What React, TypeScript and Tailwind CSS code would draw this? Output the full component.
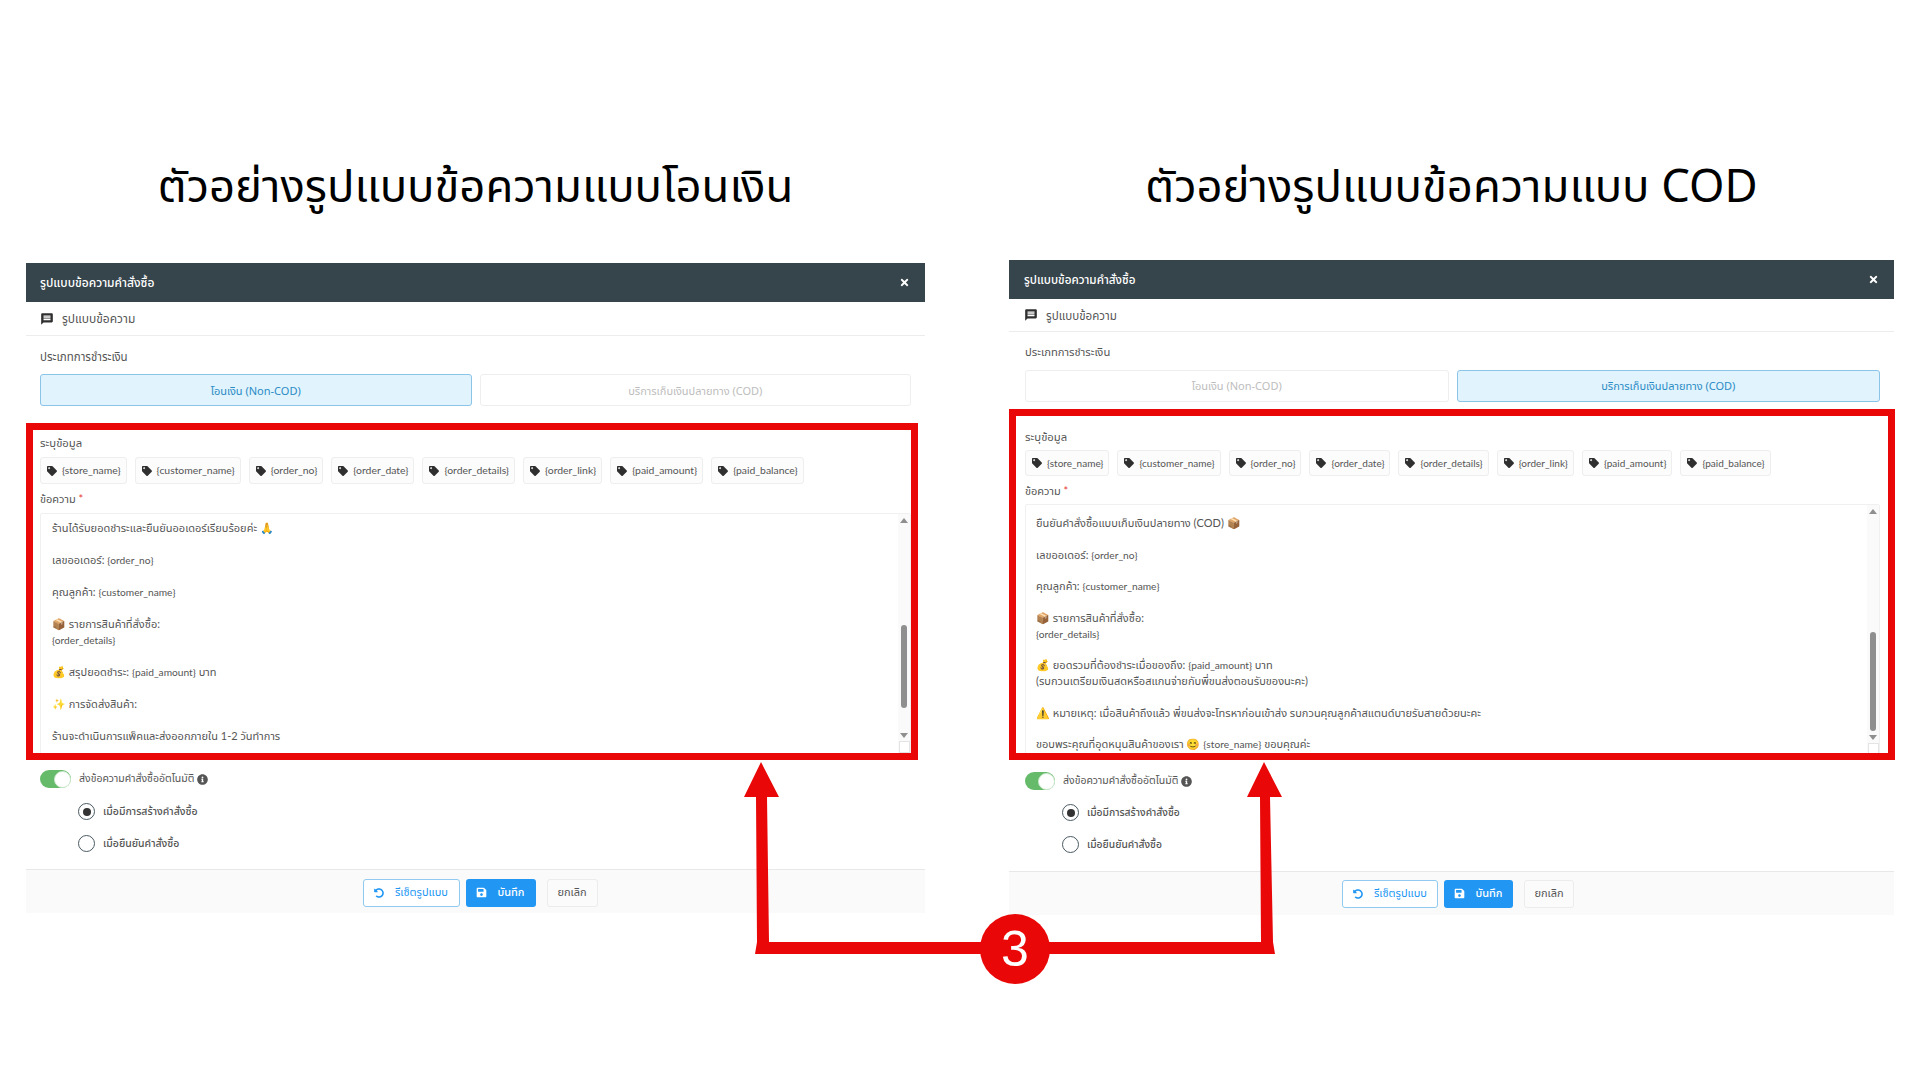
import React from 'react';
import { FaTag, FaSave, FaUndoAlt, FaInfoCircle, FaTimes } from 'react-icons/fa';
import { MdMessage } from 'react-icons/md';

const tags = ['{store_name}', '{customer_name}', '{order_no}', '{order_date}', '{order_details}', '{order_link}', '{paid_amount}', '{paid_balance}'];

const transferText = `ร้านได้รับยอดชำระและยืนยันออเดอร์เรียบร้อยค่ะ 🙏

เลขออเดอร์: {order_no}

คุณลูกค้า: {customer_name}

📦 รายการสินค้าที่สั่งซื้อ:
{order_details}

💰 สรุปยอดชำระ: {paid_amount} บาท

✨ การจัดส่งสินค้า:

ร้านจะดำเนินการแพ็คและส่งออกภายใน 1-2 วันทำการ`;

const codText = `ยืนยันคำสั่งซื้อแบบเก็บเงินปลายทาง (COD) 📦

เลขออเดอร์: {order_no}

คุณลูกค้า: {customer_name}

📦 รายการสินค้าที่สั่งซื้อ:
{order_details}

💰 ยอดรวมที่ต้องชำระเมื่อของถึง: {paid_amount} บาท
(รบกวนเตรียมเงินสดหรือสแกนจ่ายกับพี่ขนส่งตอนรับของนะคะ)

⚠️ หมายเหตุ: เมื่อสินค้าถึงแล้ว พี่ขนส่งจะโทรหาก่อนเข้าส่ง รบกวนคุณลูกค้าสแตนด์บายรับสายด้วยนะคะ

ขอบพระคุณที่อุดหนุนสินค้าของเรา 😊 {store_name} ขอบคุณค่ะ`;

const activeTab = "flex-1 h-full flex items-center justify-center rounded-[3px] border border-[#8cc4e8] bg-[#e1f3fd] text-[#2a8bc5] font-['Noto_Sans','Noto_Sans_Thai',sans-serif]";
const idleTab = "flex-1 h-full flex items-center justify-center rounded-[3px] border border-[#eeeeee] bg-white text-[#bdbdbd] font-['Noto_Sans','Noto_Sans_Thai',sans-serif]";

// fixed-height rows so the emoji lines don't push the text down
const MessageBody: React.FC<{ text: string; cod: boolean }> = ({ text, cod }) => (
  <>
    {text.split('\n').map((line, l) => (
      <div key={l} className={`whitespace-nowrap ${cod ? 'h-[15.8px] leading-[15.8px]' : 'h-[16px] leading-[16px]'}`}>
        {line.split(/(\{[a-z_]+\})/).map((part, i) =>
          part.startsWith('{') ? <span key={i} className="text-[10.2px]">{part}</span> : part
        )}
      </div>
    ))}
  </>
);

const Modal: React.FC<{ cod: boolean }> = ({ cod }) => {
  const tabPad = cod ? 'pt-px' : 'pt-[3px]';
  const radioText = cod ? 'text-[10.3px]' : 'text-[10.5px]';
  return (
    <div className={`text-[11px] text-[#555] ${cod ? 'w-[885px]' : 'w-[899px]'}`}>
      {/* header */}
      <div className={`flex items-center justify-between bg-[#36444b] text-white h-[39px] ${cod ? 'pl-[15px] pr-[15px]' : 'pl-[14px] pr-[15px]'}`}>
        <span className={`font-medium pt-px ${cod ? 'text-[11.7px]' : 'text-[12px]'}`}>รูปแบบข้อความคำสั่งซื้อ</span>
        <FaTimes size={11} />
      </div>
      <div className={`flex items-center border-b border-[#ececec] ${cod ? 'h-[33px] pl-[15px]' : 'h-[34px] pl-[14px]'}`}>
        <MdMessage size={14} className="text-[#2f2f2f] mr-[8px]" />
        <span className={`pt-px ${cod ? 'text-[11.6px]' : 'text-[12px]'}`}>รูปแบบข้อความ</span>
      </div>

      <div className={cod ? 'pl-[16px] pr-[14px]' : 'pl-[14px] pr-[14px]'}>
        <div className={`leading-[16px] ${cod ? 'mt-[12px] text-[11.2px]' : 'mt-[13px] text-[11.5px]'}`}>ประเภทการชำระเงิน</div>
        <div className={`flex gap-2 h-[32px] ${cod ? 'mt-[10px]' : 'mt-[9px]'}`}>
          <div className={`${cod ? idleTab : activeTab} ${tabPad}`}>โอนเงิน (Non-COD)</div>
          <div className={`${cod ? activeTab : idleTab} ${tabPad}`}>บริการเก็บเงินปลายทาง (COD)</div>
        </div>

        <div className={`leading-[16px] text-[11.3px] ${cod ? 'mt-[27px]' : 'mt-[29px]'}`}>ระบุข้อมูล</div>
        <div className={`flex gap-2 ${cod ? 'mt-[5px] h-[26px]' : 'mt-[6px] h-[27px]'}`}>
          {tags.map((t) => (
            <div key={t} className="flex items-center gap-[5px] pl-[6px] pr-[5px] rounded-[3px] border border-[#eeeeee] bg-[#fcfcfc]">
              <FaTag size={10} className="text-[#2f2f2f]" />
              <span className={cod ? 'text-[10px]' : 'text-[10.4px]'}>{t}</span>
            </div>
          ))}
        </div>

        <div className="leading-[16px] mt-[7px]">
          ข้อความ <span className="text-[#e53935]">*</span>
        </div>
        <div className={`flex border border-[#f0f0f0] rounded-[2px] overflow-hidden ${cod ? 'h-[252px] mt-[5px]' : 'h-[244px] mt-[6px]'}`}>
          <div className={`flex-1 overflow-hidden ${cod ? 'pl-[10px] pt-[10px]' : 'pl-[11px] pt-[6px]'}`}>
            <MessageBody text={cod ? codText : transferText} cod={cod} />
          </div>
          <div className="w-[12px] bg-[#fafafa] flex flex-col items-center">
            <div className="w-0 h-0 mt-[4px] border-x-[4px] border-x-transparent border-b-[5px] border-b-[#8f8f8f]" />
            <div className={`w-[6px] rounded-full bg-[#8f8f8f] ${cod ? 'h-[101px] mt-[118px]' : 'h-[83px] mt-[102px]'}`} />
            <div className={`w-0 h-0 border-x-[4px] border-x-transparent border-t-[5px] border-t-[#8f8f8f] ${cod ? 'mt-[4px]' : 'mt-[25px]'}`} />
            <div className="w-[11px] h-[12px] mt-[3px] border border-[#e4e4e4] bg-white" />
          </div>
        </div>

        {/* auto send */}
        <div className={`flex items-center ${cod ? 'mt-[16px]' : 'mt-[13px]'}`}>
          <div className={`h-[18px] rounded-full bg-[#66bb6a] flex items-center justify-end ${cod ? 'w-[30px]' : 'w-[31px]'}`}>
            <div className="w-[17px] h-[17px] rounded-full bg-white border border-[#cfe9d0]" />
          </div>
          <span className="ml-[8px] text-[10.5px]">ส่งข้อความคำสั่งซื้ออัตโนมัติ</span>
          <FaInfoCircle size={11} className="ml-[3px] text-[#555]" />
        </div>
        <div className={`flex items-center ${cod ? 'ml-[37px] mt-[14px]' : 'ml-[38px] mt-[15px]'}`}>
          <div className="w-[17px] h-[17px] rounded-full border border-[#4a5a63] flex items-center justify-center">
            <div className="w-[8px] h-[8px] rounded-full bg-[#333]" />
          </div>
          <span className={`ml-[8px] font-medium ${radioText}`}>เมื่อมีการสร้างคำสั่งซื้อ</span>
        </div>
        <div className={`flex items-center mt-[15px] ${cod ? 'ml-[37px]' : 'ml-[38px]'}`}>
          <div className="w-[17px] h-[17px] rounded-full border border-[#4a5a63]" />
          <span className={`ml-[8px] font-medium ${radioText}`}>เมื่อยืนยันคำสั่งซื้อ</span>
        </div>
      </div>

      {/* footer */}
      <div className={`flex justify-center items-center gap-[6px] bg-[#fafafa] border-t border-[#e8e8e8] h-[44px] ${cod ? 'mt-[18px] pl-[13px]' : 'mt-[17px] pl-[9px] pt-[2px]'}`}>
        <button className={`h-[28px] flex items-center justify-center gap-[11px] rounded-[3px] border border-[#90caf0] bg-white text-[#2196f3] ${cod ? 'w-[96px]' : 'w-[97px]'}`}>
          <FaUndoAlt size={10} />
          รีเซ็ตรูปแบบ
        </button>
        <button className={`h-[28px] flex items-center justify-center gap-[10px] rounded-[3px] bg-[#2196f3] text-white font-medium ${cod ? 'w-[69px]' : 'w-[70px]'}`}>
          <FaSave size={11} />
          บันทึก
        </button>
        <button className={`h-[28px] ml-[5px] rounded-[3px] border border-[#ececec] bg-[#fbfbfb] text-[#555] ${cod ? 'w-[50px]' : 'w-[51px]'}`}>
          ยกเลิก
        </button>
      </div>
    </div>
  );
};

const App: React.FC = () => (
  <div className="relative w-[1920px] h-[1080px] bg-white overflow-hidden flex font-['Lato','Noto_Sans_Thai','Noto_Sans',sans-serif]">
    <div className="ml-[26px] w-[899px]">
      <h1 className="h-[263px] pt-[152px] text-center text-[45.4px] leading-[64px] font-normal text-black font-['Noto_Sans','Noto_Sans_Thai',sans-serif]">ตัวอย่างรูปแบบข้อความแบบโอนเงิน</h1>
      <Modal cod={false} />
    </div>
    <div className="ml-[84px] w-[885px]">
      <h1 className="h-[260px] pt-[152px] text-center text-[45.4px] leading-[64px] font-normal text-black font-['Noto_Sans','Noto_Sans_Thai',sans-serif]">ตัวอย่างรูปแบบข้อความแบบ COD</h1>
      <Modal cod />
    </div>

    {/* red highlight frames */}
    <div className="absolute left-[26px] top-[423px] w-[892px] h-[337px] border-[7px] border-[#e90707]" />
    <div className="absolute left-[1009px] top-[409px] w-[886px] h-[351px] border-[7px] border-[#e90707]" />

    {/* arrows and the numbered badge */}
    <svg className="absolute left-0 top-0 pointer-events-none" width="1920" height="1080" viewBox="0 0 1920 1080">
      <path d="M761 762 L779 797 L767 797 L769 942 L1261 942 L1260 797 L1247 797 L1264 762 L1282 797 L1270 797 L1273 942 L1275 954 L755 954 L757 942 L756 797 L744 797 Z" fill="#e90707" />
    </svg>
    <div className="absolute left-[980px] top-[914px] w-[70px] h-[70px] rounded-full bg-[#e90707] flex items-center justify-center text-white text-[50px] leading-none font-['Liberation_Sans',sans-serif]">
      3
    </div>
  </div>
);

export default App;
